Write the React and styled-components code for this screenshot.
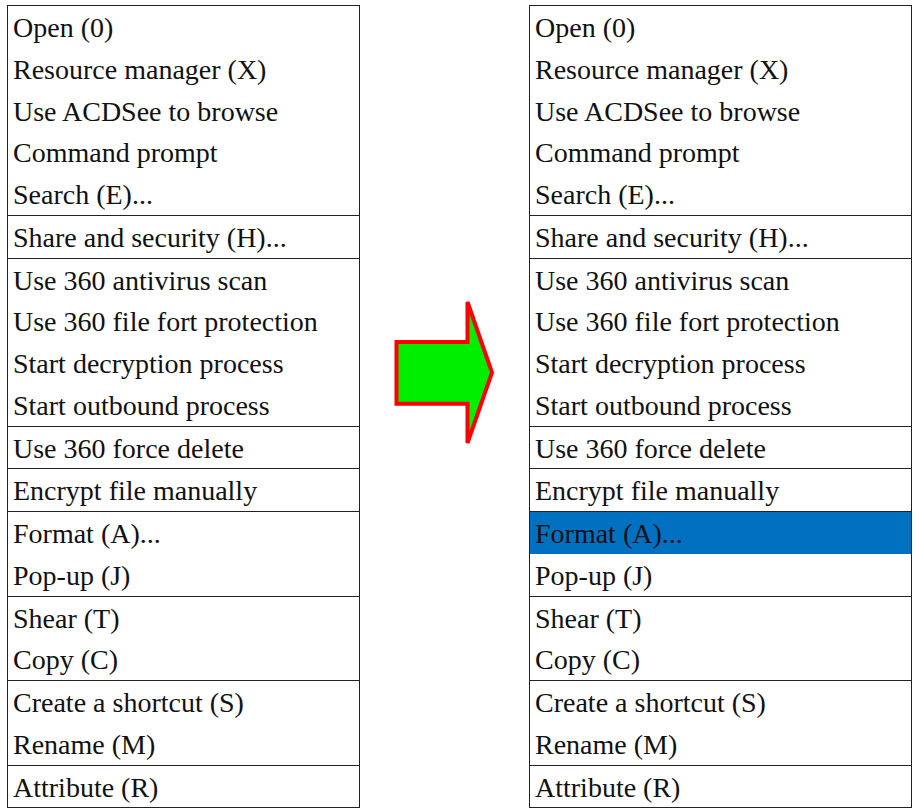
import React from 'react';
import styled, { createGlobalStyle } from 'styled-components';

const GlobalStyle = createGlobalStyle`
  body {
    margin: 0;
    background: #fff;
    font-family: "Liberation Serif", "Times New Roman", serif;
  }
`;

const groups = [
  ['Open (0)', 'Resource manager (X)', 'Use ACDSee to browse', 'Command prompt', 'Search (E)...'],
  ['Share and security (H)...'],
  ['Use 360 antivirus scan', 'Use 360 file fort protection', 'Start decryption process', 'Start outbound process'],
  ['Use 360 force delete'],
  ['Encrypt file manually'],
  ['Format (A)...', 'Pop-up (J)'],
  ['Shear (T)', 'Copy (C)'],
  ['Create a shortcut (S)', 'Rename (M)'],
  ['Attribute (R)'],
];

const Page = styled.div`
  display: flex;
  align-items: flex-start;
  padding: 5px 0 0 7px;
`;

const Menu = styled.div`
  width: ${(p) => p.$width}px;
  border: 1px solid #222;
  display: flex;
  flex-direction: column;
`;

const Group = styled.div`
  & + & {
    border-top: 1px solid #222;
  }
`;

const Item = styled.div`
  height: 41.75px;
  line-height: 43px;
  padding-left: 5px;
  font-size: 28px;
  color: #111;
  white-space: nowrap;
  overflow: hidden;
  background: ${(p) => (p.$active ? '#0070c0' : 'transparent')};
`;

const ArrowSlot = styled.div`
  width: 169px;
  display: flex;
  justify-content: center;
  padding-top: 293px;
`;

const Arrow = () => (
  <svg width="106" height="152" viewBox="0 0 106 152">
    <polygon
      points="4.5,44 75.5,44 75.5,4 100,74.5 75.5,145 75.5,105.7 4.5,105.7"
      fill="#00ee00"
      stroke="#ff0000"
      strokeWidth="4"
      strokeLinejoin="miter"
    />
  </svg>
);

const ContextMenu = ({ width, active }) => (
  <Menu $width={width}>
    {groups.map((items, gi) => (
      <Group key={gi}>
        {items.map((label) => (
          <Item key={label} $active={label === active}>
            {label}
          </Item>
        ))}
      </Group>
    ))}
  </Menu>
);

const App = () => (
  <>
    <GlobalStyle />
    <Page>
      <ContextMenu width={351} />
      <ArrowSlot>
        <Arrow />
      </ArrowSlot>
      <ContextMenu width={381} active="Format (A)..." />
    </Page>
  </>
);

export default App;
